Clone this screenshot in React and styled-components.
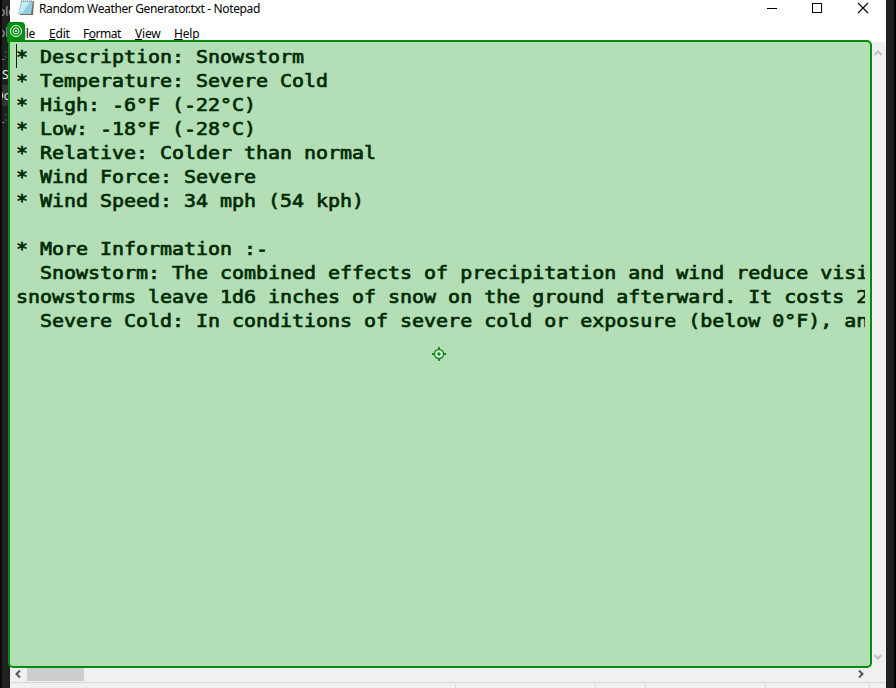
import React from "react";
import styled, { createGlobalStyle } from "styled-components";

const Global = createGlobalStyle`
  *{box-sizing:border-box}
  body{margin:0;overflow:hidden;background:#202020}
`;
const Desktop = styled.div`
  position:relative;width:896px;height:688px;display:flex;overflow:hidden;
  background:#202020;border-left:2px solid #080808;border-right:2px solid #000;
`;
const Behind = styled.div`
  width:8px;flex:none;overflow:hidden;font:12px/21px "Noto Sans",sans-serif;padding-top:1px;
`;
const BehindRow = styled.div`
  height:21px;white-space:nowrap;color:${p => p.$c};background:${p => p.$bg || "transparent"};
  text-indent:${p => p.$x || 0}px;overflow:hidden;
`;
const Blue = styled.span`color:#2f62b5;`;
const Win = styled.div`
  width:876px;height:688px;display:flex;flex-direction:column;background:#fff;
  font-family:"Noto Sans",sans-serif;font-size:12px;color:#000;
`;
const TitleBar = styled.div`height:24px;display:flex;align-items:flex-start;padding-left:8px;`;
const Title = styled.div`margin-left:4px;line-height:18px;flex:1;letter-spacing:-0.36px;white-space:nowrap;`;
const Controls = styled.svg`width:110px;height:20px;margin-right:11px;`;
const Menu = styled.div`height:18px;display:flex;line-height:20px;padding-left:2px;`;
const MenuItem = styled.div`
  width:${p => p.$w}px;padding-left:5px;letter-spacing:${p => p.$ls || 0}px;white-space:nowrap;
  u{text-underline-offset:1px}
`;
const Body = styled.div`height:624px;display:flex;`;
const Editor = styled.div`width:862px;padding:3px 6px 0 6px;background:#fff;`;
const VScroll = styled.div`
  width:14px;background:#f0f0f0;display:flex;flex-direction:column;justify-content:space-between;padding:7px 0 5px 2px;
`;
const HScroll = styled.div`height:16px;background:#f0f0f0;display:flex;align-items:center;`;
const Thumb = styled.div`width:57px;height:14px;background:#cdcdcd;margin:0 auto 0 5px;`;
const Arrow = styled.svg`width:8px;height:8px;flex:none;margin-left:${p => p.$l || 0}px;margin-right:${p => p.$r || 0}px;`;
const Status = styled.div`height:6px;background:#f0f0f0;border-top:1px solid #d7d7d7;display:flex;padding-top:1px;`;
const Cell = styled.div`width:${p => p.$w}px;border-right:1px solid #d7d7d7;`;
const Highlight = styled.div`
  position:absolute;left:6px;top:40px;width:864px;height:628px;
  border:2px solid #048c10;border-radius:0 5px 5px 5px;background:#b4deb6;overflow:hidden;
`;
const Text = styled.pre`
  margin:3px 5px 0 6px;overflow:hidden;color:#002a04;
  font:19.94px/26.667px "DejaVu Sans Mono",monospace;-webkit-text-stroke:.75px #002a04;
  transform:scaleY(.9);transform-origin:0 0;
`;
const Caret = styled.div`position:absolute;left:6px;top:2px;width:1px;height:24px;background:#002a04;`;
const Badge = styled.svg`position:absolute;left:5px;top:22px;width:18px;height:20px;`;
const Target = styled.svg`position:absolute;left:430px;top:347px;width:14px;height:14px;`;

const text = `* Description: Snowstorm
* Temperature: Severe Cold
* High: -6°F (-22°C)
* Low: -18°F (-28°C)
* Relative: Colder than normal
* Wind Force: Severe
* Wind Speed: 34 mph (54 kph)

* More Information :-
  Snowstorm: The combined effects of precipitation and wind reduce visibility
snowstorms leave 1d6 inches of snow on the ground afterward. It costs 2 squares
  Severe Cold: In conditions of severe cold or exposure (below 0°F), an unprotected`;

export default function App() {
  return (
    <Desktop>
      <Global />
      <Behind>
        <BehindRow $c="#a5a5a5" $x={-4}>old</BehindRow>
        <BehindRow $c="#a5a5a5" $x={-4}>old</BehindRow>
        <BehindRow $c="#b08050" $x={-3}>_<Blue>:</Blue></BehindRow>
        <BehindRow $c="#eee">S</BehindRow>
        <BehindRow $c="#ddd" $bg="#353535" $x={-7}>Do</BehindRow>
        <BehindRow $c="#b08050" $x={-3}>_<Blue>:</Blue></BehindRow>
      </Behind>
      <Win>
        <TitleBar>
          <svg width="17" height="17" viewBox="0 0 17 17">
            <path d="M4 1h12v1l-1 13H2z" fill="#7b6a55" />
            <path d="M3 1h12l-2 13H0z" fill="#8dcfe0" />
            <path d="M4 2h8L4 13H1z" fill="#c2ebf3" />
            <path d="M3 1h12" stroke="#777" strokeDasharray="1 1" />
          </svg>
          <Title>Random Weather Generator.txt - Notepad</Title>
          <Controls viewBox="0 0 110 20" fill="none" stroke="#000" shapeRendering="crispEdges">
            <path d="M2 8.500H12M47.500 3.500h9v9h-9z" />
            <path d="M93 3l10 10M103 3L93 13" shapeRendering="auto" strokeWidth="1.100" />
          </Controls>
        </TitleBar>
        <Menu>
          <MenuItem $w={32} $ls={-0.3}><u>F</u>ile</MenuItem>
          <MenuItem $w={34} $ls={-0.2}><u>E</u>dit</MenuItem>
          <MenuItem $w={52} $ls={-0.5}>F<u>o</u>rmat</MenuItem>
          <MenuItem $w={39} $ls={-0.2}><u>V</u>iew</MenuItem>
          <MenuItem $w={40} $ls={-0.2}><u>H</u>elp</MenuItem>
        </Menu>
        <Body>
          <Editor />
          <VScroll>
            <Arrow viewBox="0 0 8 8"><path d="M.5 6L4 2.500 7.500 6" fill="none" stroke="#bfbfbf" strokeWidth="2" /></Arrow>
            <Arrow viewBox="0 0 8 8"><path d="M.5 2L4 5.500 7.500 2" fill="none" stroke="#bfbfbf" strokeWidth="2" /></Arrow>
          </VScroll>
        </Body>
        <HScroll>
          <Arrow $l={4} viewBox="0 0 8 8"><path d="M6 .5L2.500 4 6 7.500" fill="none" stroke="#555" strokeWidth="2" /></Arrow>
          <Thumb />
          <Arrow $r={21} viewBox="0 0 8 8"><path d="M2 .5L5.500 4 2 7.500" fill="none" stroke="#555" strokeWidth="2" /></Arrow>
        </HScroll>
        <Status><Cell $w={446} /><Cell $w={140} /><Cell $w={50} /><Cell $w={120} /><Cell $w={104} /></Status>
      </Win>
      <Highlight>
        <Text>{text}</Text>
        <Caret />
      </Highlight>
      <Badge viewBox="0 0 18 20">
        <path d="M0 20V4a4 4 0 014-4h10a4 4 0 014 4v16z" fill="#048c10" />
        <g fill="none" stroke="#fff"><circle cx="9" cy="9" r="5.500" /><circle cx="9" cy="9" r="3" /></g>
        <circle cx="9" cy="9" r="1" fill="#fff" />
      </Badge>
      <Target viewBox="0 0 14 14">
        <circle cx="7" cy="7" r="4.500" fill="#e1f4e2" stroke="#048c10" strokeWidth="1.400" />
        <circle cx="7" cy="7" r="1.700" fill="#048c10" />
        <path d="M7 0v3M7 11v3M0 7h3M11 7h3" stroke="#048c10" strokeWidth="1.800" />
      </Target>
    </Desktop>
  );
}
